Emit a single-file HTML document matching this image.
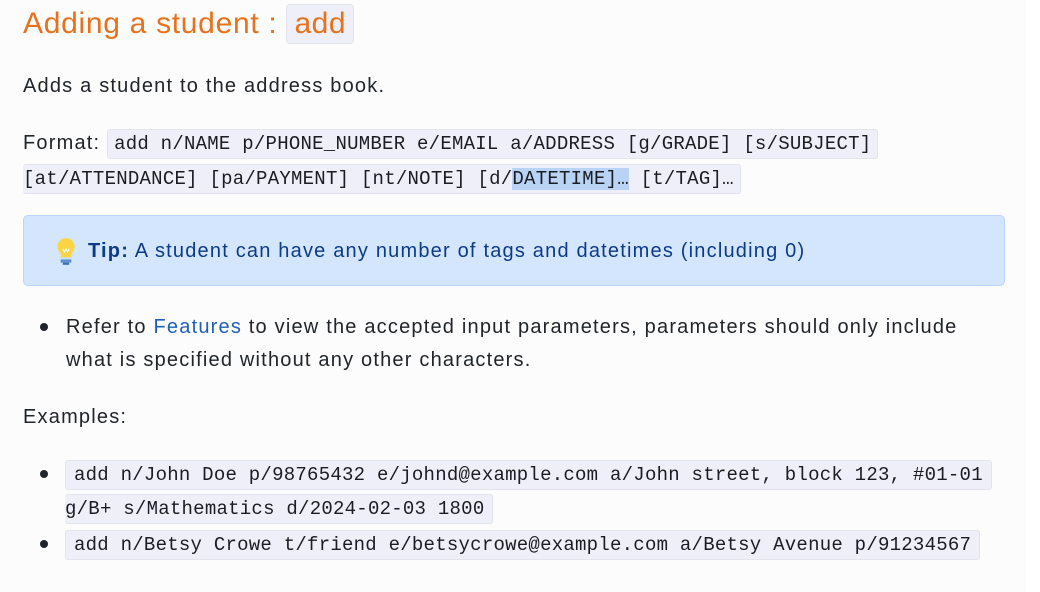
<!DOCTYPE html>
<html><head><meta charset="utf-8"><style>
body{margin:0;width:1040px;height:592px;background:#fcfcfd;font-family:"Liberation Sans",sans-serif;color:#212529;position:relative;overflow:hidden}
.r{position:absolute;left:1026px;top:0;width:14px;height:592px;background:#fff}
.a{position:absolute;white-space:nowrap;font-size:20px;letter-spacing:1.2px}
code,.c{font-family:"Liberation Mono",monospace;font-size:19px;letter-spacing:0.25px;background:#efeff9;border:1px solid #e4e4f0;border-radius:3px;color:#1a1d21}
.hl{background:#b9d3f5}
</style></head><body>
<div class="r"></div>
<div class="a" style="left:23px;top:4px;font-size:30px;letter-spacing:0.7px;color:#e8711c;line-height:40px">Adding a student : <span style="display:inline-block;background:#efeff9;border:1px solid #e4e4f0;border-radius:4px;padding:0 7px;height:38px;line-height:38px;letter-spacing:0.5px">add</span></div>
<div class="a" style="left:23px;top:73px;line-height:26px">Adds a student to the address book.</div>
<div class="a" style="left:23px;top:130px;line-height:26px">Format: <span class="c" style="padding:3px 6px">add n/NAME p/PHONE_NUMBER e/EMAIL a/ADDRESS [g/GRADE] [s/SUBJECT]</span></div>
<div class="a" style="left:23px;top:165px;line-height:26px"><span class="c" style="padding:3px 6px 3px 0;border-left:none">[at/ATTENDANCE] [pa/PAYMENT] [nt/NOTE] [d/<span class="hl">DATETIME]…</span> [t/TAG]…</span></div>
<div style="position:absolute;left:23px;top:215px;width:980px;height:69px;background:#d4e5fe;border:1px solid #bad4fb;border-radius:5px"></div>
<svg style="position:absolute;left:54px;top:236px" width="24" height="32" viewBox="0 0 20 30"><circle cx="10" cy="10" r="8" fill="#fbd541"/><rect x="5" y="13" width="10" height="7" fill="#fbd541"/><path d="M7 12l1.5 3 1.5-3 1.5 3 1.5-3" stroke="#fff" stroke-width="1" fill="none"/><rect x="5" y="20" width="10" height="2" fill="#cde"/><rect x="5" y="22" width="10" height="3" fill="#5a8fd0"/><rect x="7" y="25" width="6" height="2" fill="#3a6fb0"/></svg>
<div class="a" style="left:88px;top:238px;line-height:26px;color:#0c3b86"><b>Tip:</b> A student can have any number of tags and datetimes (including 0)</div>
<div style="position:absolute;left:40px;top:323px;width:8px;height:8px;border-radius:50%;background:#212529"></div>
<div class="a" style="left:66px;top:314px;line-height:26px">Refer to <span style="color:#1f5fb8">Features</span> to view the accepted input parameters, parameters should only include</div>
<div class="a" style="left:66px;top:347px;line-height:26px">what is specified without any other characters.</div>
<div class="a" style="left:23px;top:404px;line-height:26px">Examples:</div>
<div style="position:absolute;left:40px;top:470px;width:8px;height:8px;border-radius:50%;background:#212529"></div>
<div class="a" style="left:65px;top:461px;line-height:26px"><span class="c" style="padding:3px 8px">add n/John Doe p/98765432 e/johnd@example.com a/John street, block 123, #01-01</span></div>
<div class="a" style="left:65px;top:495px;line-height:26px"><span class="c" style="padding:3px 8px 3px 0;border-left:none">g/B+ s/Mathematics d/2024-02-03 1800</span></div>
<div style="position:absolute;left:40px;top:540px;width:8px;height:8px;border-radius:50%;background:#212529"></div>
<div class="a" style="left:65px;top:531px;line-height:26px"><span class="c" style="padding:3px 8px">add n/Betsy Crowe t/friend e/betsycrowe@example.com a/Betsy Avenue p/91234567</span></div>
</body></html>
